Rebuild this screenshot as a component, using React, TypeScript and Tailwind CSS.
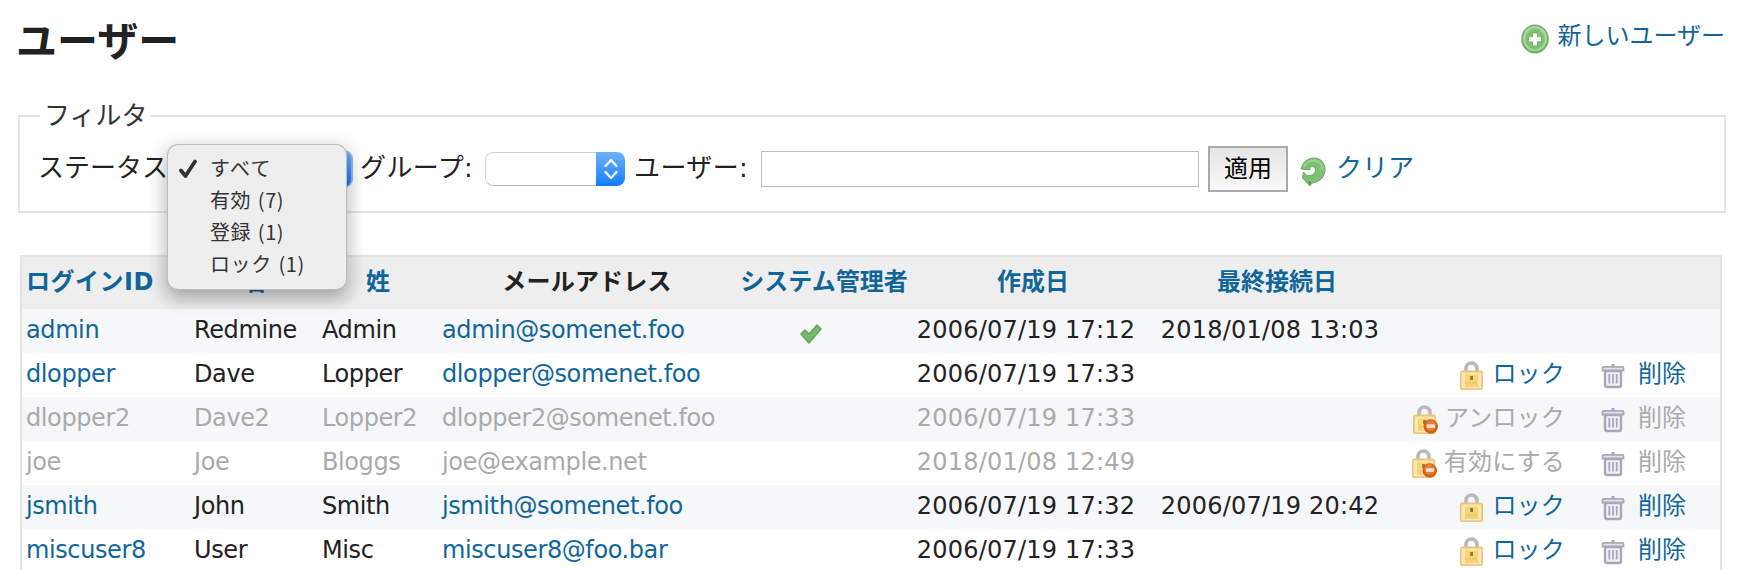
import React from "react";

type User = {
  login: string;
  first: string;
  last: string;
  mail: string;
  admin?: boolean;
  created: string;
  lastLogin?: string;
  action?: string;
  inactive?: boolean;
};

const users: User[] = [
  { login: "admin", first: "Redmine", last: "Admin", mail: "admin@somenet.foo", admin: true, created: "2006/07/19 17:12", lastLogin: "2018/01/08 13:03" },
  { login: "dlopper", first: "Dave", last: "Lopper", mail: "dlopper@somenet.foo", created: "2006/07/19 17:33", action: "ロック" },
  { login: "dlopper2", first: "Dave2", last: "Lopper2", mail: "dlopper2@somenet.foo", created: "2006/07/19 17:33", action: "アンロック", inactive: true },
  { login: "joe", first: "Joe", last: "Bloggs", mail: "joe@example.net", created: "2018/01/08 12:49", action: "有効にする", inactive: true },
  { login: "jsmith", first: "John", last: "Smith", mail: "jsmith@somenet.foo", created: "2006/07/19 17:32", lastLogin: "2006/07/19 20:42", action: "ロック" },
  { login: "miscuser8", first: "User", last: "Misc", mail: "miscuser8@foo.bar", created: "2006/07/19 17:33", action: "ロック" },
];

function AddIcon() {
  return (
    <svg viewBox="0 0 28 30" className="h-[30px] w-7">
      <ellipse cx="14" cy="15" rx="13.8" ry="14.5" fill="#74b26b" />
      <ellipse cx="14" cy="14.5" rx="12" ry="12.6" fill="#a9d69f" />
      <ellipse cx="14" cy="15" rx="9.8" ry="10.4" fill="#80c173" />
      <path d="M11.5 9h5v3.800h4v5h-4v4h-5v-4h-4v-5h4z" fill="#fff" stroke="#69ad60" strokeWidth="0.800" strokeLinejoin="round" />
    </svg>
  );
}

function ReloadIcon() {
  return (
    <svg viewBox="0 0 26 30" className="h-[30px] w-[26px]">
      <path
        d="M1 12C2.500 5 8 1 14 1c6.500 0 11 5 11 11.500C25 20 20 25 12 26l-2 3-7.500-8L3.500 15l3.500 3.500c4 1 8.500-1.500 8.500-5.500 0-2-1.500-3.500-3.200-3.500S9.500 11 10 13z"
        fill="#7fbf75"
        stroke="#6aab61"
        strokeLinejoin="round"
      />
      <path d="M4 9.500C6 5 11 3 15 3.500c5 1 7.500 5 7.500 9.500" fill="none" stroke="#9fd195" strokeWidth="2" />
      <path d="M8 24.500l2 3.500 1-3z" fill="#4c8345" />
    </svg>
  );
}

function CheckIcon() {
  return (
    <svg viewBox="0 0 24 22" className="h-[22px] w-6">
      <path d="M2 11l4-4 4 4 8-9 4 4-12 14z" fill="#78b970" stroke="#64a65b" strokeWidth="1.500" strokeLinejoin="round" />
    </svg>
  );
}

function LockIcon({ minus }: { minus?: boolean }) {
  return (
    <svg viewBox="0 0 26 30" className="h-[30px] w-[26px] shrink-0">
      <path d="M7 11V7.500a5.500 5.500 0 0 1 11 0V11" fill="none" stroke="#b9b9b9" strokeWidth="3.600" />
      <rect x="1.800" y="10.500" width="21.400" height="17.700" rx="1.500" fill="#f9e6b0" stroke="#ebc580" strokeWidth="1.800" />
      <rect x="6" y="13.500" width="13" height="11" fill="#f5d672" />
      <path d="M6 22h13M6 25h13" stroke="#e6c070" strokeWidth="1" />
      <rect x="11.200" y="15" width="2.800" height="4" fill="#8f7440" />
      {minus && (
        <g>
          <circle cx="18.800" cy="21.500" r="7.200" fill="#cf5f12" />
          <circle cx="18.800" cy="20.500" r="5.400" fill="#e57d35" />
          <rect x="14.800" y="19.300" width="8" height="3.600" fill="#fbe3d2" />
        </g>
      )}
    </svg>
  );
}

function TrashIcon() {
  return (
    <svg viewBox="0 0 24 26" className="h-[26px] w-6 shrink-0">
      <path d="M4 8h16v14q0 2-2 2H6q-2 0-2-2z" fill="#f1f0f4" stroke="#a9a6b8" strokeWidth="2.400" />
      <path d="M8.300 11v9.500M12 11v9.500M15.700 11v9.500" stroke="#a9a6b8" strokeWidth="1.800" />
      <path d="M1.500 7.500V5q0-1.200 1.200-1.200h18.600q1.200 0 1.200 1.200v2.500z" fill="#e3e0ea" stroke="#a9a6b8" strokeWidth="1.800" />
      <path d="M12 1v3" stroke="#a9a6b8" strokeWidth="3" />
    </svg>
  );
}

function Arrows() {
  return (
    <svg viewBox="0 0 14 22" className="h-[22px] w-[14px]" fill="none" stroke="#fff" strokeWidth="2.200" strokeLinecap="round" strokeLinejoin="round">
      <path d="M1.500 8L7 2l5.500 6M1.500 14L7 20l5.500-6" />
    </svg>
  );
}

const th = "p-0 pb-0.5 font-bold whitespace-nowrap";
const td = "p-0 pb-0.5 pl-1 tracking-[-0.4px]";

function Row({ u, odd }: { u: User; odd: boolean }) {
  const link = u.inactive ? "text-[#aaa]" : "text-[#169]";
  return (
    <tr className={`h-11 leading-[42px] whitespace-nowrap ${odd ? "bg-[#f6f7f8]" : "bg-white"} ${u.inactive ? "text-[#aaa]" : "text-[#222]"}`}>
      <td className={td}><a className={link}>{u.login}</a></td>
      <td className={td}>{u.first}</td>
      <td className={td}>{u.last}</td>
      <td className={td}><a className={link}>{u.mail}</a></td>
      <td className="p-0">{u.admin && <div className="flex justify-center pt-1.5 pr-[26px]"><CheckIcon /></div>}</td>
      <td className="p-0 pr-3.5 pb-0.5 text-center tracking-[0.22px]">{u.created}</td>
      <td className="p-0 pr-3.5 pb-0.5 text-center tracking-[0.22px]">{u.lastLogin}</td>
      <td className="p-0 pr-[34px]">
        {u.action && (
          <div className="flex h-11 items-center justify-end">
            <span className="flex pt-px"><LockIcon minus={u.inactive} /></span>
            <a className={`ml-[7px] pb-0.5 tracking-[0.2px] ${link}`}>{u.action}</a>
            <span className="ml-[36px] flex pt-0.5"><TrashIcon /></span>
            <a className={`ml-[13px] pb-0.5 ${link}`}>{"削除"}</a>
          </div>
        )}
      </td>
    </tr>
  );
}

export default function App() {
  return (
    <div className="relative h-[570px] w-[1744px] overflow-hidden bg-white pl-[18px] font-['DejaVu_Sans','Noto_Sans_CJK_JP',sans-serif] text-2xl leading-[44px] text-[#222]">
      <header className="flex h-[115px] justify-between pr-[19px]">
        <h1 className="-ml-0.5 h-[60px] pt-3.5 text-[41px] leading-[56px] font-bold">ユーザー</h1>
        <a className="flex h-11 items-center gap-2 pt-[27px] text-[#169]">
          <span className="pt-1.5"><AddIcon /></span>
          <span>新しいユーザー</span>
        </a>
      </header>

      <fieldset className="relative h-[98px] w-[1708px] border-2 border-[#e4e4e4]">
        <legend className="absolute top-[-23px] left-5 h-11 bg-white px-1 text-[26px] text-[#333]">フィルタ</legend>
        <div className="flex h-[94px] items-center pt-[10px] pl-[18px] text-[26px] whitespace-nowrap">
          <span className="w-[135px] pb-[3px]">ステータス:</span>
          <span className="flex h-[38px] w-[180px] justify-end rounded-[9px] border-2 border-[#8fbdf0] bg-white">
            <span className="w-[29px] rounded-r-md bg-linear-to-b from-[#6bb2fa] to-[#0b79fd]" />
          </span>
          <span className="ml-[7px] w-[125px] pb-[3px] tracking-[0.4px]">グループ:</span>
          <span className="flex h-[34px] w-[140px] overflow-hidden rounded-[8px]">
            <span className="flex-1 rounded-l-[8px] border border-r-0 border-[#cfcfcf] border-b-[#b5b5b5]" />
            <span className="flex w-[29px] items-center justify-center bg-linear-to-b from-[#6bb2f8] to-[#0a7aff]"><Arrows /></span>
          </span>
          <span className="ml-[9px] w-[127px] pb-[3px] tracking-[0.4px]">ユーザー:</span>
          <span className="h-9 w-[438px] border border-[#bbb] bg-white" />
          <button className="ml-[9px] h-[46px] w-20 border-2 border-[#aaa] bg-linear-to-b from-[#e5e5e5] to-[#f9f9f9] text-2xl leading-[40px] text-black">適用</button>
          <span className="ml-3 pt-1.5"><ReloadIcon /></span>
          <a className="ml-2.5 pb-[3px] text-[#169]">クリア</a>
        </div>
      </fieldset>

      <table className="mt-[42px] ml-0.5 w-[1702px] table-fixed border-separate border-spacing-0 border-2 border-b-0 border-[#e4e4e4]">
        <colgroup>
          <col className="w-[168px]" />
          <col className="w-[128px]" />
          <col className="w-[120px]" />
          <col className="w-[298px]" />
          <col className="w-[176px]" />
          <col className="w-[242px]" />
          <col className="w-[246px]" />
          <col />
        </colgroup>
        <thead>
          <tr className="h-[52px] bg-[#eee] text-[#169]">
            <th className={`${th} pl-1 text-left tracking-[0.5px]`}>ログインID</th>
            <th className={th}>名</th>
            <th className={th}>姓</th>
            <th className={`${th} tracking-[0.2px] text-[#222]`}>メールアドレス</th>
            <th className={th}>システム管理者</th>
            <th className={th}>作成日</th>
            <th className={th}>最終接続日</th>
            <th />
          </tr>
        </thead>
        <tbody>
          {users.map((u, i) => <Row key={u.login} u={u} odd={i % 2 === 0} />)}
        </tbody>
      </table>

      <ul className="absolute top-[145px] left-[168px] h-[144px] w-[178px] rounded-[10px] bg-[#eee] pt-[7px] pl-[42px] font-['Noto_Sans_CJK_JP',sans-serif] text-xl leading-8 tracking-[0.6px] text-[#333] shadow-[0_0_0_1px_#bdbdbd,0_8px_16px_rgba(0,0,0,0.28),0_5px_10px_14px_rgba(0,0,0,0.045)] [word-spacing:1.5px]">
        <li className="relative tracking-[1.3px]">
          <svg viewBox="0 0 18 20" className="absolute top-[7px] left-[-31px] h-5 w-[18px]" fill="none" stroke="#333" strokeWidth="3.800" strokeLinecap="round" strokeLinejoin="round">
            <path d="M2 11.500L6.500 17 16 2.500" />
          </svg>
          すべて
        </li>
        <li>有効 (7)</li>
        <li>登録 (1)</li>
        <li>ロック (1)</li>
      </ul>
    </div>
  );
}
